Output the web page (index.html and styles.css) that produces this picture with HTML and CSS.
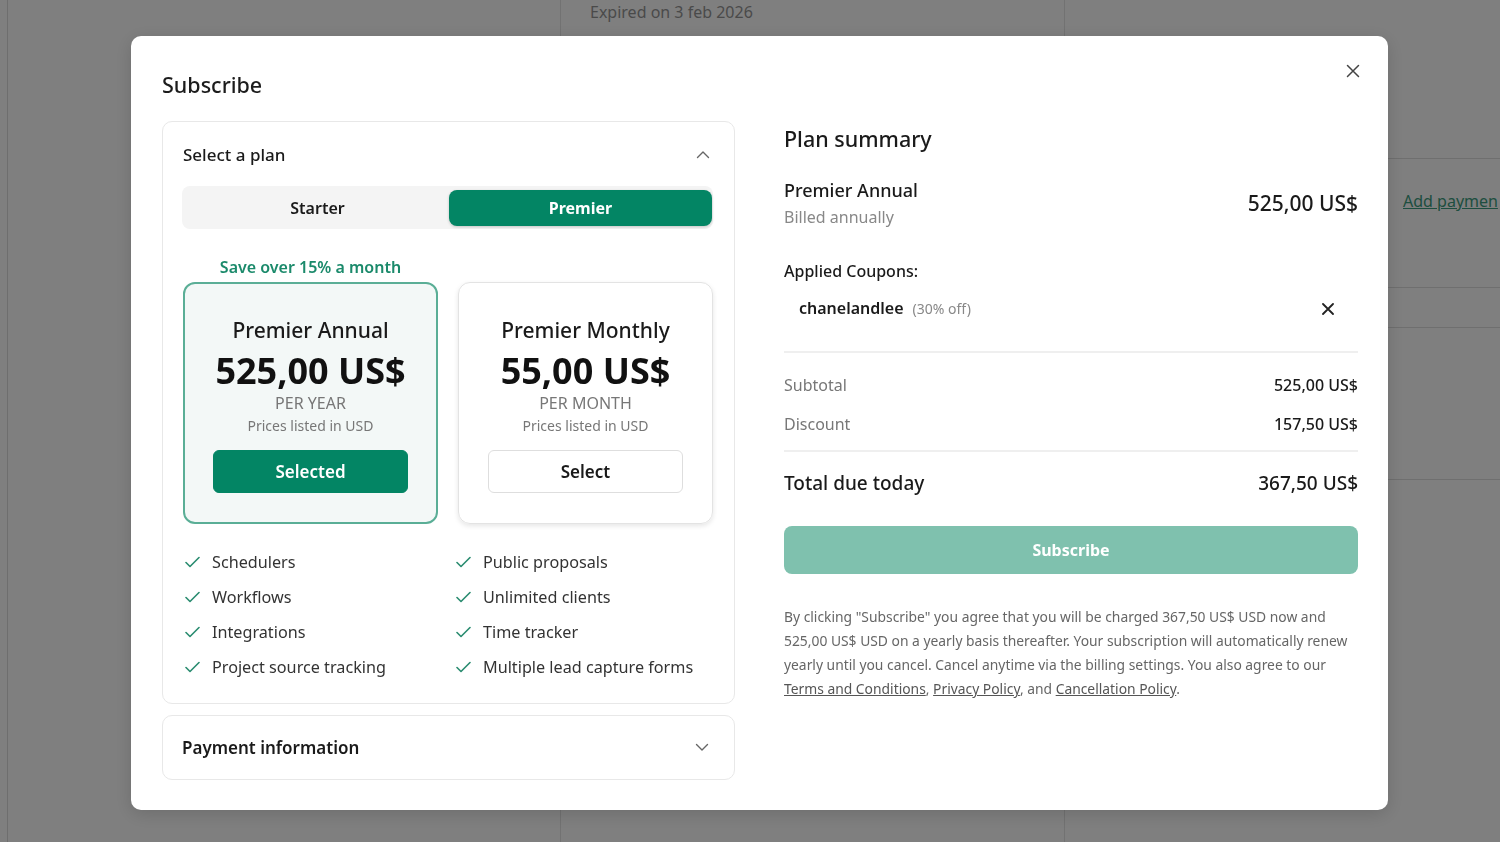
FILE: index.html
```html
<!DOCTYPE html>
<html lang="en">
<head>
<meta charset="utf-8">
<title>Subscribe</title>
<link rel="stylesheet" href="styles.css">
</head>
<body>
<div class="page">
  <div class="sidebar"></div>
  <div class="gutter"></div>
  <div class="expired-card"><span class="expired-text">Expired on 3 feb 2026</span></div>
  <div class="right-panel">
    <div class="rp-row rp-row-1"><a class="rp-link">Add paymen</a></div>
    <div class="rp-row rp-row-2"></div>
    <div class="rp-row rp-row-3"></div>
    <div class="rp-row rp-row-4"></div>
  </div>
</div>

<div class="overlay">
  <div class="modal">
    <button class="close" aria-label="Close">
      <svg width="14" height="14" viewBox="0 0 14 14"><path d="M1.5 1.5 L12.5 12.5 M12.5 1.5 L1.5 12.5" stroke="#444" stroke-width="1.5" stroke-linecap="round" fill="none"/></svg>
    </button>
    <h1 class="modal-title">Subscribe</h1>
    <div class="modal-body">
      <div class="left-col">
        <section class="panel plan-panel">
          <div class="panel-head">
            <span>Select a plan</span>
            <svg class="chev" width="14" height="9" viewBox="0 0 14 9"><path d="M1.5 7.5 L7 2 L12.5 7.5" stroke="#666" stroke-width="1.4" fill="none" stroke-linecap="round" stroke-linejoin="round"/></svg>
          </div>
          <div class="tabs">
            <div class="tab">Starter</div>
            <div class="tab active">Premier</div>
          </div>
          <div class="plans">
            <div class="save">Save over 15% a month</div>
            <div class="save-spacer"></div>
            <div class="plan-card selected">
              <div class="plan-name">Premier Annual</div>
              <div class="plan-price">525,00 US$</div>
              <div class="plan-per">PER YEAR</div>
              <div class="plan-note">Prices listed in USD</div>
              <div class="plan-btn primary">Selected</div>
            </div>
            <div class="plan-card">
              <div class="plan-name">Premier Monthly</div>
              <div class="plan-price">55,00 US$</div>
              <div class="plan-per">PER MONTH</div>
              <div class="plan-note">Prices listed in USD</div>
              <div class="plan-btn">Select</div>
            </div>
          </div>
          <ul class="features">
            <li><svg class="check" width="15" height="12" viewBox="0 0 15 12"><path d="M1 6.5 L5 10.5 L14 1.5" stroke="#2a8c70" stroke-width="1.6" fill="none" stroke-linecap="round" stroke-linejoin="round"/></svg>Schedulers</li>
            <li><svg class="check" width="15" height="12" viewBox="0 0 15 12"><path d="M1 6.5 L5 10.5 L14 1.5" stroke="#2a8c70" stroke-width="1.6" fill="none" stroke-linecap="round" stroke-linejoin="round"/></svg>Public proposals</li>
            <li><svg class="check" width="15" height="12" viewBox="0 0 15 12"><path d="M1 6.5 L5 10.5 L14 1.5" stroke="#2a8c70" stroke-width="1.6" fill="none" stroke-linecap="round" stroke-linejoin="round"/></svg>Workflows</li>
            <li><svg class="check" width="15" height="12" viewBox="0 0 15 12"><path d="M1 6.5 L5 10.5 L14 1.5" stroke="#2a8c70" stroke-width="1.6" fill="none" stroke-linecap="round" stroke-linejoin="round"/></svg>Unlimited clients</li>
            <li><svg class="check" width="15" height="12" viewBox="0 0 15 12"><path d="M1 6.5 L5 10.5 L14 1.5" stroke="#2a8c70" stroke-width="1.6" fill="none" stroke-linecap="round" stroke-linejoin="round"/></svg>Integrations</li>
            <li><svg class="check" width="15" height="12" viewBox="0 0 15 12"><path d="M1 6.5 L5 10.5 L14 1.5" stroke="#2a8c70" stroke-width="1.6" fill="none" stroke-linecap="round" stroke-linejoin="round"/></svg>Time tracker</li>
            <li><svg class="check" width="15" height="12" viewBox="0 0 15 12"><path d="M1 6.5 L5 10.5 L14 1.5" stroke="#2a8c70" stroke-width="1.6" fill="none" stroke-linecap="round" stroke-linejoin="round"/></svg>Project source tracking</li>
            <li><svg class="check" width="15" height="12" viewBox="0 0 15 12"><path d="M1 6.5 L5 10.5 L14 1.5" stroke="#2a8c70" stroke-width="1.6" fill="none" stroke-linecap="round" stroke-linejoin="round"/></svg>Multiple lead capture forms</li>
          </ul>
        </section>
        <section class="panel pay-panel">
          <span>Payment information</span>
          <svg class="chev" width="14" height="9" viewBox="0 0 14 9"><path d="M1.5 1.5 L7 7 L12.5 1.5" stroke="#666" stroke-width="1.4" fill="none" stroke-linecap="round" stroke-linejoin="round"/></svg>
        </section>
      </div>

      <div class="right-col">
        <h2 class="summary-title">Plan summary</h2>
        <div class="line-item">
          <div>
            <div class="li-name">Premier Annual</div>
            <div class="li-sub">Billed annually</div>
          </div>
          <div class="li-price">525,00 US$</div>
        </div>
        <div class="coupons-label">Applied Coupons:</div>
        <div class="coupon">
          <div><span class="coupon-code">chanelandlee</span><span class="coupon-off">(30% off)</span></div>
          <svg width="12" height="12" viewBox="0 0 12 12"><path d="M1 1 L11 11 M11 1 L1 11" stroke="#222" stroke-width="1.8" stroke-linecap="round" fill="none"/></svg>
        </div>
        <div class="divider first"></div>
        <div class="sum-row"><span class="sum-label">Subtotal</span><span class="sum-value">525,00 US$</span></div>
        <div class="sum-row discount"><span class="sum-label">Discount</span><span class="sum-value">157,50 US$</span></div>
        <div class="divider second"></div>
        <div class="total-row"><span>Total due today</span><span>367,50 US$</span></div>
        <div class="subscribe-btn">Subscribe</div>
        <p class="legal">
          <span class="legal-line">By clicking "Subscribe" you agree that you will be charged 367,50 US$ USD now and</span>
          <span class="legal-line">525,00 US$ USD on a yearly basis thereafter. Your subscription will automatically renew</span>
          <span class="legal-line">yearly until you cancel. Cancel anytime via the billing settings. You also agree to our</span>
          <span class="legal-line"><a class="legal-link">Terms and Conditions</a>, <a class="legal-link">Privacy Policy</a>, and <a class="legal-link">Cancellation Policy</a>.</span>
        </p>
      </div>
    </div>
  </div>
</div>
</body>
</html>
```

FILE: styles.css
```css
* { box-sizing: border-box; margin: 0; padding: 0; }
html, body { width: 1500px; height: 842px; overflow: hidden; }
body {
  font-family: "Noto Sans", "Open Sans", sans-serif;
  background: #fff;
  color: #1a1a1a;
}

/* background page */
.page {
  display: grid;
  grid-template-columns: 8px 552px 505px 1fr;
  height: 842px;
}
.sidebar { border-right: 1px solid #dcdcdc; }
.expired-card {
  border-left: 1px solid #e4e4e4;
  border-right: 1px solid #e4e4e4;
  padding: 1px 0 0 29px;
}
.expired-text { font-size: 16px; line-height: 22px; color: #959595; }
.right-panel { padding-top: 158px; }
.rp-row { border-top: 1px solid #dedede; }
.rp-row-1 { height: 129px; padding: 31px 0 0 338px; white-space: nowrap; }
.rp-link { color: #3c9c80; text-decoration: underline; font-size: 16px; line-height: 22px; }
.rp-row-2 { height: 40px; }
.rp-row-3 { height: 152px; }

/* overlay + modal */
.overlay {
  position: fixed;
  inset: 0;
  background: rgba(0, 0, 0, 0.5);
  padding: 36px 0 0 131px;
}
.modal {
  position: relative;
  width: 1257px;
  height: 774px;
  background: #fff;
  border-radius: 10px;
  padding: 34px 30px 0 31px;
  box-shadow: 0 4px 18px rgba(0, 0, 0, 0.15);
}
.close {
  position: absolute;
  top: 28px;
  right: 28px;
  width: 14px;
  height: 14px;
  border: 0;
  background: none;
  display: flex;
}
.modal-title { font-size: 21.5px; line-height: 30px; font-weight: 500; color: #1c1c1c; }
.modal-body {
  display: grid;
  grid-template-columns: 573px 574px;
  column-gap: 49px;
  margin-top: 21px;
  align-items: start;
}

/* left column */
.panel { border: 1px solid #e8e8e8; border-radius: 10px; background: #fff; }
.plan-panel { padding: 20px 21px 24px 20px; }
.panel-head {
  display: flex;
  justify-content: space-between;
  align-items: center;
  height: 24px;
  font-size: 17px;
  font-weight: 500;
}
.chev { margin-right: 3px; }
.tabs {
  margin-top: 20px;
  display: grid;
  grid-template-columns: 1fr 1fr;
  background: #f4f4f4;
  border-radius: 8px;
  padding: 4px 1px 3px 4px;
  height: 43px;
  margin-left: -1px;
}
.tab {
  display: flex;
  align-items: center;
  justify-content: center;
  font-size: 16px;
  font-weight: 600;
  border-radius: 8px;
  color: #1a1a1a;
}
.tab.active {
  background: #038564;
  color: #fff;
  font-weight: 700;
  box-shadow: 0 1px 3px rgba(0, 0, 0, 0.2);
}
.plans {
  display: grid;
  grid-template-columns: 1fr 1fr;
  column-gap: 20px;
  margin-top: 27px;
}
.save {
  text-align: center;
  font-size: 16px;
  line-height: 22px;
  font-weight: 600;
  color: #1b8a6b;
  margin-bottom: 4px;
}
.plan-card {
  border: 1px solid #e3e3e3;
  border-radius: 12px;
  padding: 33px 29px 30px;
  text-align: center;
  box-shadow: 0 2px 5px rgba(0, 0, 0, 0.1);
}
.plan-card.selected {
  border: 2px solid #5aae96;
  background: #f3f8f7;
  box-shadow: none;
  padding: 32px 28px 29px;
}
.plan-name { font-size: 21px; line-height: 28px; font-weight: 500; }
.plan-price { font-size: 36px; line-height: 44px; font-weight: 700; margin-top: 5px; color: #111; }
.plan-per { font-size: 16px; line-height: 22px; color: #777; margin-top: -1px; }
.plan-note { font-size: 14px; line-height: 20px; color: #777; margin-top: 2px; }
.plan-btn {
  margin-top: 14px;
  height: 43px;
  border-radius: 6px;
  display: flex;
  align-items: center;
  justify-content: center;
  font-size: 17px;
  font-weight: 600;
  border: 1px solid #dedede;
  background: #fff;
}
.plan-btn.primary { background: #038564; color: #fff; border-color: #038564; }

.features {
  list-style: none;
  margin-top: 26px;
  display: grid;
  grid-template-columns: 258px 258px;
  column-gap: 13px;
  row-gap: 11px;
}
.features li {
  display: flex;
  align-items: center;
  gap: 12px;
  font-size: 16.2px;
  line-height: 24px;
  color: #333;
}
.check { margin-left: 2px; flex: none; }

.pay-panel {
  margin-top: 11px;
  height: 65px;
  padding: 0 22px 0 19px;
  display: flex;
  justify-content: space-between;
  align-items: center;
  font-size: 17px;
  font-weight: 600;
}

/* right column */
.summary-title { font-size: 21.5px; line-height: 30px; font-weight: 500; margin-top: 3px; }
.line-item {
  display: flex;
  justify-content: space-between;
  align-items: center;
  margin-top: 24px;
}
.li-name { font-size: 18px; line-height: 24px; font-weight: 500; }
.li-sub { font-size: 16px; line-height: 22px; color: #888; margin-top: 4px; }
.li-price { font-size: 21px; line-height: 28px; font-weight: 500; }
.coupons-label { margin-top: 32px; font-size: 16px; line-height: 22px; font-weight: 500; }
.coupon {
  margin-top: 15px;
  padding: 0 24px 0 15px;
  display: flex;
  justify-content: space-between;
  align-items: center;
  line-height: 22px;
}
.coupon-code { font-size: 16px; font-weight: 600; }
.coupon-off { font-size: 14px; color: #888; margin-left: 9px; }
.divider { height: 2px; background: #efefef; }
.divider.first { margin-top: 31px; }
.divider.second { margin-top: 15px; }
.sum-row {
  display: flex;
  justify-content: space-between;
  margin-top: 21px;
  font-size: 16px;
  line-height: 22px;
}
.sum-row.discount { margin-top: 17px; }
.sum-label { color: #777; }
.sum-value { font-weight: 500; }
.total-row {
  display: flex;
  justify-content: space-between;
  margin-top: 18px;
  font-size: 19px;
  line-height: 26px;
  font-weight: 500;
}
.subscribe-btn {
  margin-top: 30px;
  height: 48px;
  border-radius: 8px;
  background: #7fc1ae;
  color: #fff;
  display: flex;
  align-items: center;
  justify-content: center;
  font-size: 16px;
  font-weight: 700;
}
.legal { margin-top: 31px; font-size: 13.85px; line-height: 24px; color: #666; }
.legal-line { display: block; white-space: nowrap; }
.legal-link { color: #555; text-decoration: underline; }
```
